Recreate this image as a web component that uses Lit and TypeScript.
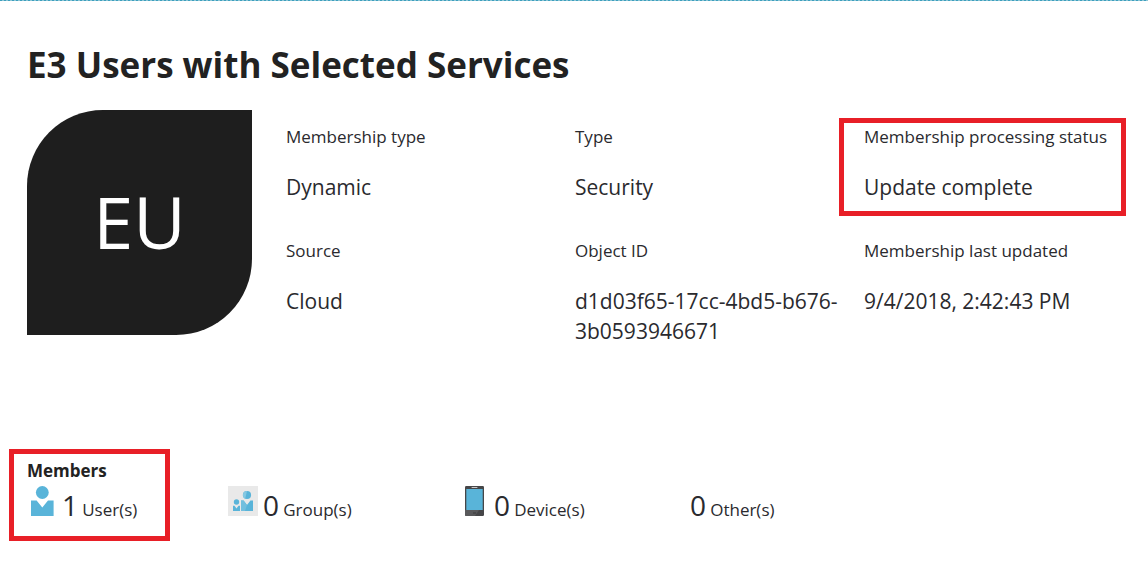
import { LitElement, html, css, svg, nothing } from "lit";
import { customElement, property } from "lit/decorators.js";
import { classMap } from "lit/directives/class-map.js";

interface Field {
  label: string;
  value: string;
  marked?: boolean;
}

interface Count {
  icon?: "user" | "group" | "device";
  total: number;
  label: string;
}

const FIELDS: Field[] = [
  { label: "Membership type", value: "Dynamic" },
  { label: "Type", value: "Security" },
  { label: "Membership processing status", value: "Update complete", marked: true },
  { label: "Source", value: "Cloud" },
  { label: "Object ID", value: "d1d03f65-17cc-4bd5-b676-3b0593946671" },
  { label: "Membership last updated", value: "9/4/2018, 2:42:43 PM" },
];

const COUNTS: Count[] = [
  { icon: "user", total: 1, label: "User(s)" },
  { icon: "group", total: 0, label: "Group(s)" },
  { icon: "device", total: 0, label: "Device(s)" },
  { total: 0, label: "Other(s)" },
];

const ICONS = {
  user: svg`
    <circle cx="15.3" cy="6.5" r="6.4" fill="#59b4d9"/>
    <path d="M4 14.5h5.6l5.7 7 5.7-7h5.6V30H4z" fill="#59b4d9"/>`,
  group: svg`
    <rect width="30" height="30" fill="#e9e9e9"/>
    <circle cx="8.5" cy="16" r="2.7" fill="#59b4d9"/>
    <path d="M5 19.8h1.5l2 2.6 2-2.6H12V25H5z" fill="#59b4d9"/>
    <circle cx="19" cy="9" r="4.1" fill="#59b4d9"/>
    <path d="M19 4.9a4.1 4.1 0 0 0-1.8 7.8z" fill="#85c8e2"/>
    <path d="M13 14.5h2.6l3.4 4.6 3.4-4.6H25V25H13z" fill="#59b4d9"/>
    <path d="M13 14.5h2.6l3.4 4.6-2 5.9h-4z" fill="#72bfde"/>`,
  device: svg`
    <rect x="6" y="0" width="19" height="30" rx="1.2" fill="#464648"/>
    <path d="M6 24h14l-4 6H7.2A1.2 1.2 0 0 1 6 28.800z" fill="#59595b"/>
    <rect x="7.300" y="3" width="16.400" height="21" fill="#59b4d9"/>
    <rect x="12.500" y="1" width="6" height="1" rx="0.500" fill="#c8c8c8"/>
    <rect x="14" y="26.500" width="3" height="1" fill="#3a3a3c"/>`,
};

@customElement("group-avatar")
export class GroupAvatar extends LitElement {
  @property() initials = "";

  static styles = css`
    :host {
      display: flex;
      align-items: center;
      justify-content: center;
      width: 225px;
      height: 225px;
      box-sizing: border-box;
      padding-bottom: 4px;
      border-radius: 76px 0;
      background: #1e1e1e;
      color: #fff;
      font-size: 72px;
      line-height: 80px;
    }
  `;

  render() {
    return html`${this.initials}`;
  }
}

@customElement("member-count")
export class MemberCount extends LitElement {
  @property({ attribute: false }) count!: Count;

  static styles = css`
    :host {
      display: flex;
      align-items: flex-start;
      gap: 5px;
    }
    .icon {
      flex: none;
      width: 30px;
      height: 30px;
    }
    .text {
      line-height: 38px;
      white-space: nowrap;
    }
    .total {
      font-size: 28px;
    }
    .label {
      font-size: 17px;
    }
  `;

  render() {
    const { icon, total, label } = this.count;
    return html`
      ${icon
        ? html`<svg class="icon" viewBox="0 0 30 30" aria-hidden="true">${ICONS[icon]}</svg>`
        : nothing}
      <span class="text"><span class="total">${total}</span> <span class="label">${label}</span></span>
    `;
  }
}

@customElement("app-root")
export class AppRoot extends LitElement {
  static styles = css`
    :host {
      display: block;
      min-height: 100vh;
      box-sizing: border-box;
      background: #fff;
      color: #2a2a2e;
      font-family: "Open Sans", "Noto Sans", sans-serif;
    }
    .rule {
      height: 1px;
      background: repeating-linear-gradient(90deg, #3c9fbd 0 2px, #8cc5d6 2px 4px);
    }
    .page {
      padding: 38px 7px 16px 27px;
    }
    .title {
      margin: 0;
      font-size: 35px;
      line-height: 52px;
      font-weight: 700;
      color: #222;
    }
    .overview {
      display: flex;
      gap: 34px;
      margin-top: 19px;
    }
    .avatar {
      flex: none;
    }
    .fields {
      flex: 1;
      display: grid;
      grid-template-columns: repeat(3, minmax(0, 1fr));
      gap: 34px 12px;
      align-content: start;
      margin: 0;
      padding-top: 12px;
    }
    .field,
    .members {
      position: relative;
    }
    .name {
      font-size: 17px;
      line-height: 30px;
    }
    .value {
      margin: 20px 0 0;
      font-size: 21px;
      line-height: 30px;
      overflow-wrap: anywhere;
    }
    .marked::after {
      content: "";
      position: absolute;
      border: 5px solid #e81f27;
      pointer-events: none;
    }
    .field.marked::after {
      inset: -4px 15px -14px -25px;
    }
    .members {
      margin-top: 113px;
    }
    .members.marked::after {
      inset: -10px auto -12px -18px;
      width: 151px;
    }
    .heading {
      margin: 0;
      font-size: 17px;
      line-height: 24px;
      font-weight: 700;
      color: #222;
    }
    .counts {
      display: grid;
      grid-template-columns: 201fr 231fr 231fr 451fr;
      margin-top: 3px;
    }
  `;

  render() {
    return html`
      <div class="rule"></div>
      <main class="page">
        <h1 class="title">E3 Users with Selected Services</h1>
        <section class="overview">
          <group-avatar class="avatar" initials="EU"></group-avatar>
          <dl class="fields">
            ${FIELDS.map(
              (f) => html`<div class=${classMap({ field: true, marked: !!f.marked })}>
                <dt class="name">${f.label}</dt>
                <dd class="value">${f.value}</dd>
              </div>`
            )}
          </dl>
        </section>
        <section class="members marked">
          <h2 class="heading">Members</h2>
          <div class="counts">
            ${COUNTS.map((c) => html`<member-count .count=${c}></member-count>`)}
          </div>
        </section>
      </main>
    `;
  }
}
